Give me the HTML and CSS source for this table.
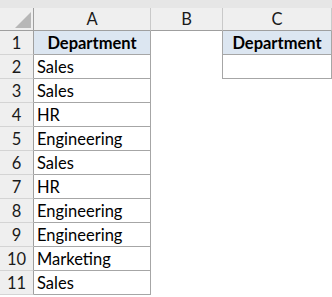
FILE: index.html
```html
<!DOCTYPE html>
<html>
<head>
<meta charset="utf-8">
<link rel="stylesheet" href="styles.css">
</head>
<body>
<div class="band"></div>
<div class="sheet">
  <div class="corner"><svg class="tri" width="18" height="18" viewBox="0 0 18 18"><polygon points="17,1 17,17 1,17" fill="#b7b7b7"/></svg></div>
  <div class="colh">A</div>
  <div class="colh">B</div>
  <div class="colh">C</div>
  <div class="colh end"></div>

  <div class="rowh">1</div>
  <div class="cell a hdr">Department</div>
  <div class="cell b edge"></div>
  <div class="cell c hdr">Department</div>
  <div class="cell z"></div>

  <div class="rowh">2</div>
  <div class="cell a">Sales</div>
  <div class="cell b edge"></div>
  <div class="cell c"></div>
  <div class="cell z"></div>

  <div class="rowh">3</div>
  <div class="cell a">Sales</div>
  <div class="cell b"></div>
  <div class="cell n"></div>
  <div class="cell z"></div>

  <div class="rowh">4</div>
  <div class="cell a">HR</div>
  <div class="cell b"></div>
  <div class="cell n"></div>
  <div class="cell z"></div>

  <div class="rowh">5</div>
  <div class="cell a">Engineering</div>
  <div class="cell b"></div>
  <div class="cell n"></div>
  <div class="cell z"></div>

  <div class="rowh">6</div>
  <div class="cell a">Sales</div>
  <div class="cell b"></div>
  <div class="cell n"></div>
  <div class="cell z"></div>

  <div class="rowh">7</div>
  <div class="cell a">HR</div>
  <div class="cell b"></div>
  <div class="cell n"></div>
  <div class="cell z"></div>

  <div class="rowh">8</div>
  <div class="cell a">Engineering</div>
  <div class="cell b"></div>
  <div class="cell n"></div>
  <div class="cell z"></div>

  <div class="rowh">9</div>
  <div class="cell a">Engineering</div>
  <div class="cell b"></div>
  <div class="cell n"></div>
  <div class="cell z"></div>

  <div class="rowh">10</div>
  <div class="cell a">Marketing</div>
  <div class="cell b"></div>
  <div class="cell n"></div>
  <div class="cell z"></div>

  <div class="rowh">11</div>
  <div class="cell a">Sales</div>
  <div class="cell b"></div>
  <div class="cell n"></div>
  <div class="cell z"></div>
</div>
</body>
</html>
```

FILE: styles.css
```css
* { box-sizing: border-box; }
html, body { margin: 0; padding: 0; background: #ffffff; }
body {
  width: 332px;
  height: 297px;
  overflow: hidden;
  font-family: Lato, "Open Sans", "Liberation Sans", sans-serif;
  font-size: 16.5px;
  color: #000;
}
.band { height: 8px; background: #e6e6e6; }
.sheet {
  display: grid;
  grid-template-columns: 34px 117px 72px 109px 0px;
  grid-template-rows: 23px repeat(11, 24px);
}
.corner {
  background: #efefef;
  border-right: 1px solid #9f9f9f;
  border-bottom: 1px solid #9f9f9f;
  display: flex;
  align-items: flex-end;
  justify-content: flex-end;
  padding: 0 1px 1px 0;
}
.tri { display: block; }
.colh {
  background: #efefef;
  border-right: 1px solid #c9c9c9;
  border-bottom: 1px solid #9f9f9f;
  display: flex;
  align-items: flex-end;
  justify-content: center;
  padding-bottom: 1px;
  color: #1a1a1a;
  line-height: 20px;
}
.colh.end { border-right: none; }
.rowh {
  background: #efefef;
  border-right: 1px solid #9f9f9f;
  border-bottom: 1px solid #d4d4d4;
  display: flex;
  align-items: flex-end;
  justify-content: center;
  padding-bottom: 1px;
  color: #1a1a1a;
  line-height: 20px;
}
.cell {
  display: flex;
  align-items: flex-end;
  padding: 0 3px 1px 3px;
  line-height: 20px;
  white-space: nowrap;
}
.cell.a {
  border-right: 1px solid #a6a6a6;
  border-bottom: 1px solid #a6a6a6;
}
.cell.c {
  border-right: 1px solid #a6a6a6;
  border-bottom: 1px solid #a6a6a6;
}
.cell.b.edge { border-right: 1px solid #a6a6a6; }
.cell.hdr {
  background: #dce6f1;
  font-weight: bold;
  justify-content: center;
}
```
